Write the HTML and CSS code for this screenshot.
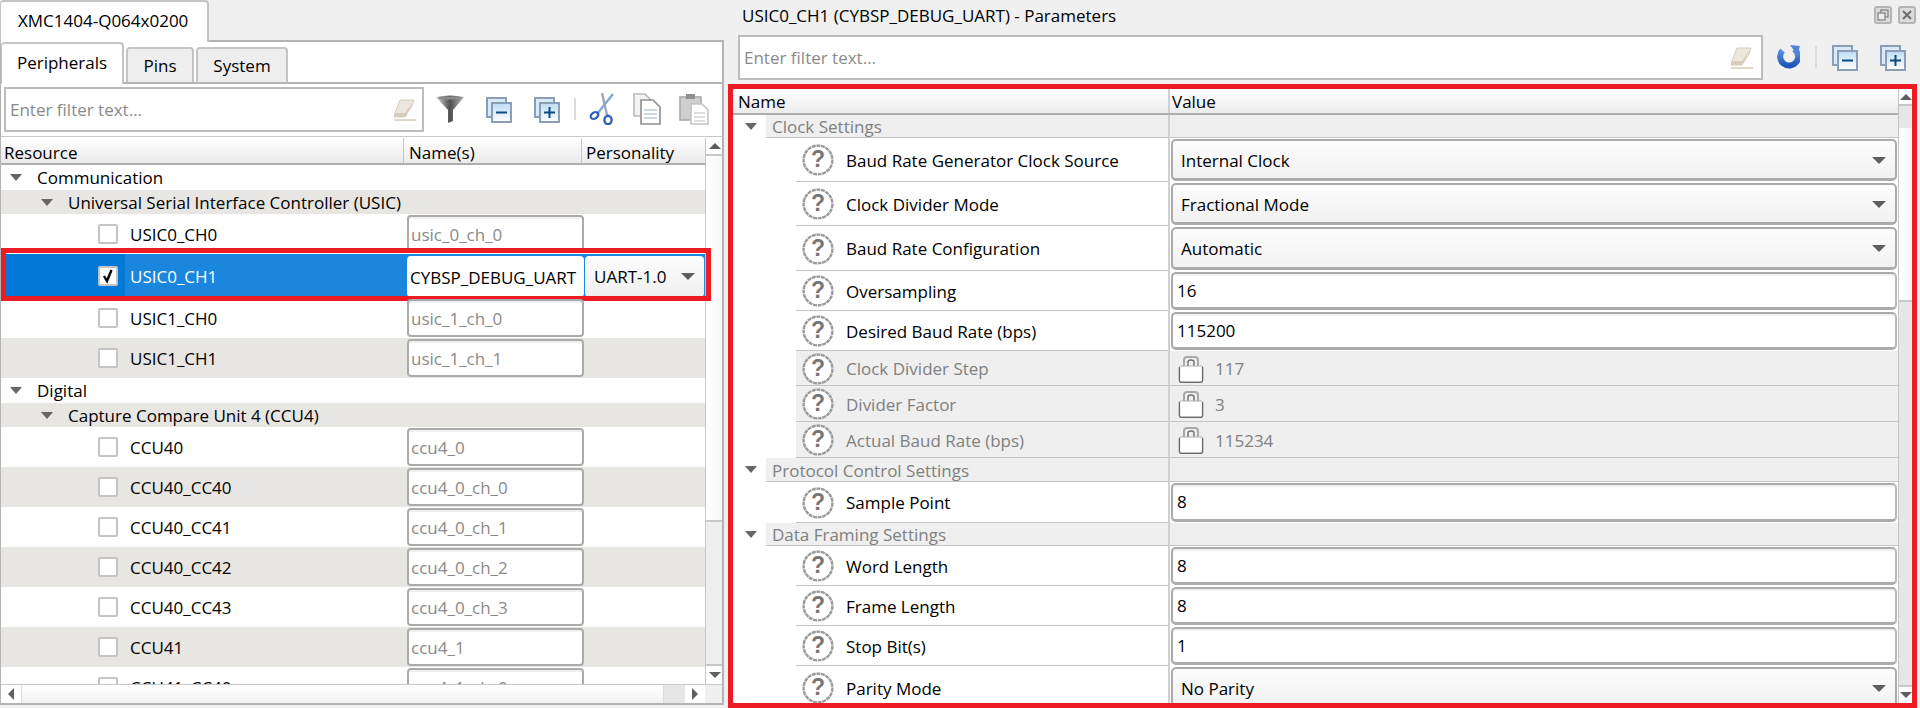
FILE: index.html
```html
<!DOCTYPE html>
<html lang="en">
<head>
<meta charset="utf-8">
<title>XMC1404-Q064x0200</title>
<link rel="stylesheet" href="styles.css">
</head>
<body>
<svg class="defs" width="0" height="0">
  <defs>
    <linearGradient id="gFunnel" x1="0" x2="1" y1="0" y2="0"><stop offset="0" stop-color="#d8d8d8"/><stop offset=".5" stop-color="#4f4f4f"/><stop offset="1" stop-color="#b8b8b8"/></linearGradient>
    <linearGradient id="gBox" x1="0" x2="0" y1="0" y2="1"><stop offset="0" stop-color="#bcdcf6"/><stop offset="1" stop-color="#ffffff"/></linearGradient>
    <linearGradient id="gRef" x1="0" x2="0" y1="0" y2="1"><stop offset="0" stop-color="#5f97e6"/><stop offset="1" stop-color="#1f55b5"/></linearGradient>
    <symbol id="i-eraser" viewBox="0 0 24 24">
      <path d="M8 2 H22 L20 8 L13 19 H2 L3 15 Z" fill="#ece7de" stroke="#d6ccbc"/>
      <path d="M3 15 L13 15 L21 4 L13 19 H2 Z" fill="#d9ccb8"/>
      <path d="M2 22 H24" stroke="#e0d8ca" stroke-width="2"/>
    </symbol>
    <symbol id="i-collapse" viewBox="0 0 26 26">
      <rect x="1" y="1" width="19" height="19" fill="#d9ebfa" stroke="#8c9db6" stroke-width="2"/>
      <rect x="6" y="6" width="19" height="19" fill="url(#gBox)" stroke="#8c9db6" stroke-width="2"/>
      <path d="M10 15.5 H21" stroke="#0b4a82" stroke-width="2"/>
    </symbol>
    <symbol id="i-expand" viewBox="0 0 26 26">
      <rect x="1" y="1" width="19" height="19" fill="#d9ebfa" stroke="#8c9db6" stroke-width="2"/>
      <rect x="6" y="6" width="19" height="19" fill="url(#gBox)" stroke="#8c9db6" stroke-width="2"/>
      <path d="M10 15.5 H21 M15.5 10 V21" stroke="#0b4a82" stroke-width="2"/>
    </symbol>
    <symbol id="i-help" viewBox="0 0 32 32">
      <circle cx="16" cy="16" r="14.4" fill="#fff" stroke="#9b9b9b" stroke-width="2.4" stroke-dasharray="4 .7"/>
      <text x="16" y="23" text-anchor="middle" class="help-q">?</text>
    </symbol>
    <symbol id="i-lock" viewBox="0 0 26 28">
      <path d="M6 13 V5 Q6 2 9 2 H17 Q20 2 20 5 V13" fill="none" stroke="#a9a9a9" stroke-width="2"/>
      <path d="M10 13 V7 Q10 5 13 5 Q16 5 16 7 V13" fill="none" stroke="#6f6f6f" stroke-width="1.4"/>
      <rect x="1" y="11" width="24" height="16" rx="2" fill="#fff" stroke="#b0b0b0"/>
      <path d="M1.5 12 V26 Q1.5 27.4 3 27.4 H23 Q24.5 27.4 24.5 26 V12" fill="none" stroke="#6a6a6a" stroke-width="1.2"/>
    </symbol>
  </defs>
</svg>

<div class="app">
  <section class="left">
    <div class="doc-tabs"><div class="doc-tab">XMC1404-Q064x0200</div></div>
    <div class="left-body">
      <div class="sub-tabs">
        <div class="sub-tab active">Peripherals</div>
        <div class="sub-tab pins">Pins</div>
        <div class="sub-tab sys">System</div>
      </div>
      <div class="left-tools">
        <div class="filter filter-left">
          <span class="ph">Enter filter text...</span>
          <svg class="ic-eraser"><use href="#i-eraser"/></svg>
        </div>
        <svg class="ic-funnel" viewBox="0 0 28 28"><path d="M0 2 Q14 -1 28 2 L17 15 V26 L12 28 V15 Z" fill="url(#gFunnel)"/><ellipse cx="14" cy="3" rx="12" ry="1.6" fill="#8a8a8a"/></svg>
        <svg class="ic-box first"><use href="#i-collapse"/></svg>
        <svg class="ic-box"><use href="#i-expand"/></svg>
        <span class="tool-sep"></span>
        <svg class="ic-scissors" viewBox="0 0 26 32">
          <path d="M24 1 L8 21" stroke="#7fa6d8" stroke-width="2.4"/>
          <path d="M13 0 L18 22" stroke="#9aa7b6" stroke-width="2.4"/>
          <ellipse cx="5.5" cy="22.5" rx="4.2" ry="3" fill="none" stroke="#2f5fc0" stroke-width="2.2" transform="rotate(-35 5.5 22.5)"/>
          <ellipse cx="19" cy="27" rx="3.6" ry="4.2" fill="none" stroke="#2f5fc0" stroke-width="2.4"/>
        </svg>
        <svg class="ic-copy" viewBox="0 0 28 32">
          <path d="M1 1 H12 L17 6 V23 H1 Z" fill="#f4f4f4" stroke="#b9b9b9" stroke-width="1.6"/>
          <path d="M8 7 H20 L27 14 V31 H8 Z" fill="#fff" stroke="#8e8e8e" stroke-width="1.6"/>
          <path d="M11 17 H24 M11 21 H24 M11 25 H24" stroke="#b9cde0" stroke-width="1.6"/>
        </svg>
        <svg class="ic-paste" viewBox="0 0 30 32">
          <rect x="1" y="4" width="21" height="23" fill="#cfcfcf" stroke="#a9a9a9" stroke-width="1.6"/>
          <rect x="7" y="1" width="9" height="5" fill="#8f8f8f"/>
          <path d="M12 11 H23 L29 17 V31 H12 Z" fill="#fff" stroke="#c4c4c4" stroke-width="1.6"/>
          <path d="M15 20 H26 M15 24 H26 M15 28 H26" stroke="#d4d4d4" stroke-width="1.6"/>
        </svg>
      </div>
      <div class="tree-wrap">
        <div class="tree">
          <div class="thead">
            <div class="th c-res">Resource</div>
            <div class="th c-name">Name(s)</div>
            <div class="th c-pers">Personality</div>
          </div>
          <div class="trow cat"><i class="tri tri-a"></i><span>Communication</span></div>
          <div class="trow sub alt"><i class="tri tri-b"></i><span>Universal Serial Interface Controller (USIC)</span></div>
          <div class="trow item"><div class="c-res"><i class="cb"></i><span>USIC0_CH0</span></div><div class="c-name"><div class="nm">usic_0_ch_0</div></div></div>
          <div class="trow item sel">
            <div class="c-res"><i class="sel-mark"></i><i class="cb"><svg class="tick" viewBox="0 0 16 16"><path d="M4 8 L7 13 L11.5 2" fill="none" stroke="#000" stroke-width="2.4"/></svg></i><span>USIC0_CH1</span></div>
            <div class="c-name"><div class="nm on">CYBSP_DEBUG_UART</div></div>
            <div class="c-pers"><div class="pers">UART-1.0<i class="tri tri-c"></i></div></div>
            <div class="red-row"></div>
          </div>
          <div class="trow item"><div class="c-res"><i class="cb"></i><span>USIC1_CH0</span></div><div class="c-name"><div class="nm">usic_1_ch_0</div></div></div>
          <div class="trow item alt"><div class="c-res"><i class="cb"></i><span>USIC1_CH1</span></div><div class="c-name"><div class="nm">usic_1_ch_1</div></div></div>
          <div class="trow cat"><i class="tri tri-a"></i><span>Digital</span></div>
          <div class="trow sub alt"><i class="tri tri-b"></i><span>Capture Compare Unit 4 (CCU4)</span></div>
          <div class="trow item"><div class="c-res"><i class="cb"></i><span>CCU40</span></div><div class="c-name"><div class="nm">ccu4_0</div></div></div>
          <div class="trow item alt"><div class="c-res"><i class="cb"></i><span>CCU40_CC40</span></div><div class="c-name"><div class="nm">ccu4_0_ch_0</div></div></div>
          <div class="trow item"><div class="c-res"><i class="cb"></i><span>CCU40_CC41</span></div><div class="c-name"><div class="nm">ccu4_0_ch_1</div></div></div>
          <div class="trow item alt"><div class="c-res"><i class="cb"></i><span>CCU40_CC42</span></div><div class="c-name"><div class="nm">ccu4_0_ch_2</div></div></div>
          <div class="trow item"><div class="c-res"><i class="cb"></i><span>CCU40_CC43</span></div><div class="c-name"><div class="nm">ccu4_0_ch_3</div></div></div>
          <div class="trow item alt"><div class="c-res"><i class="cb"></i><span>CCU41</span></div><div class="c-name"><div class="nm">ccu4_1</div></div></div>
          <div class="trow item"><div class="c-res"><i class="cb"></i><span>CCU41_CC40</span></div><div class="c-name"><div class="nm">ccu4_1_ch_0</div></div></div>
        </div>
        <div class="vbar vbar-left">
          <div class="vbtn"><i class="arr up"></i></div>
          <div class="vthumb"></div>
          <div class="vtrack"></div>
          <div class="vbtn dn"><i class="arr down"></i></div>
        </div>
      </div>
      <div class="hbar">
        <div class="hbtn"><i class="arr lf"></i></div>
        <div class="hthumb"></div>
        <div class="htrack"></div>
        <div class="hbtn"><i class="arr rt"></i></div>
        <div class="hcorner"></div>
      </div>
    </div>
  </section>

  <section class="right">
    <div class="r-title">
      <span>USIC0_CH1 (CYBSP_DEBUG_UART) - Parameters</span>
      <div class="win-btns">
        <svg class="win" viewBox="0 0 18 18"><rect x="1" y="1" width="16" height="16" rx="2" fill="#dcdcdc" stroke="#b4b4b4" stroke-width="2"/><rect x="7" y="4" width="7" height="7" fill="none" stroke="#8c8c8c" stroke-width="1.4"/><rect x="4" y="7" width="7" height="7" fill="#eee" stroke="#8c8c8c" stroke-width="1.4"/></svg>
        <svg class="win" viewBox="0 0 18 18"><rect x="1" y="1" width="16" height="16" rx="2" fill="#dcdcdc" stroke="#b4b4b4" stroke-width="2"/><path d="M5 5 L13 13 M13 5 L5 13" stroke="#707070" stroke-width="2.2"/></svg>
      </div>
    </div>
    <div class="r-tools">
      <div class="filter filter-right">
        <span class="ph">Enter filter text...</span>
        <svg class="ic-eraser"><use href="#i-eraser"/></svg>
      </div>
      <svg class="ic-refresh" viewBox="0 0 24 24"><path d="M6.5 5.5 A9 9 0 1 0 18 4" fill="none" stroke="url(#gRef)" stroke-width="6"/><path d="M14 0 L24 1 L21 10 Z" fill="#4f86da"/></svg>
      <span class="tool-sep r-sep"></span>
      <svg class="ic-box r-first"><use href="#i-collapse"/></svg>
      <svg class="ic-box r-second"><use href="#i-expand"/></svg>
    </div>
    <div class="params">
      <div class="ptable">
        <div class="phead"><div class="ph-name">Name</div><div class="ph-val">Value</div></div>
        <div class="prow grp h23"><div class="pn"><i class="tri tri-p"></i><div class="pn-in">Clock Settings</div></div><div class="pv"></div></div>
        <div class="prow h44"><div class="pn"><div class="pn-in"><svg class="help"><use href="#i-help"/></svg>Baud Rate Generator Clock Source</div></div><div class="pv"><div class="combo">Internal Clock<i class="tri tri-c"></i></div></div></div>
        <div class="prow h44"><div class="pn"><div class="pn-in"><svg class="help"><use href="#i-help"/></svg>Clock Divider Mode</div></div><div class="pv"><div class="combo">Fractional Mode<i class="tri tri-c"></i></div></div></div>
        <div class="prow h45"><div class="pn"><div class="pn-in"><svg class="help"><use href="#i-help"/></svg>Baud Rate Configuration</div></div><div class="pv"><div class="combo">Automatic<i class="tri tri-c"></i></div></div></div>
        <div class="prow h40"><div class="pn"><div class="pn-in"><svg class="help"><use href="#i-help"/></svg>Oversampling</div></div><div class="pv"><div class="field">16</div></div></div>
        <div class="prow h40"><div class="pn"><div class="pn-in"><svg class="help"><use href="#i-help"/></svg>Desired Baud Rate (bps)</div></div><div class="pv"><div class="field">115200</div></div></div>
        <div class="prow dis h35"><div class="pn"><div class="pn-in"><svg class="help"><use href="#i-help"/></svg>Clock Divider Step</div></div><div class="pv"><svg class="lock"><use href="#i-lock"/></svg>117</div></div>
        <div class="prow dis h36"><div class="pn"><div class="pn-in"><svg class="help"><use href="#i-help"/></svg>Divider Factor</div></div><div class="pv"><svg class="lock"><use href="#i-lock"/></svg>3</div></div>
        <div class="prow dis h36"><div class="pn"><div class="pn-in"><svg class="help"><use href="#i-help"/></svg>Actual Baud Rate (bps)</div></div><div class="pv"><svg class="lock"><use href="#i-lock"/></svg>115234</div></div>
        <div class="prow grp h24"><div class="pn"><i class="tri tri-p"></i><div class="pn-in">Protocol Control Settings</div></div><div class="pv"></div></div>
        <div class="prow h41"><div class="pn"><div class="pn-in"><svg class="help"><use href="#i-help"/></svg>Sample Point</div></div><div class="pv"><div class="field">8</div></div></div>
        <div class="prow grp h23"><div class="pn"><i class="tri tri-p"></i><div class="pn-in">Data Framing Settings</div></div><div class="pv"></div></div>
        <div class="prow h40"><div class="pn"><div class="pn-in"><svg class="help"><use href="#i-help"/></svg>Word Length</div></div><div class="pv"><div class="field">8</div></div></div>
        <div class="prow h40"><div class="pn"><div class="pn-in"><svg class="help"><use href="#i-help"/></svg>Frame Length</div></div><div class="pv"><div class="field">8</div></div></div>
        <div class="prow h40"><div class="pn"><div class="pn-in"><svg class="help"><use href="#i-help"/></svg>Stop Bit(s)</div></div><div class="pv"><div class="field">1</div></div></div>
        <div class="prow h44"><div class="pn"><div class="pn-in"><svg class="help"><use href="#i-help"/></svg>Parity Mode</div></div><div class="pv"><div class="combo">No Parity<i class="tri tri-c"></i></div></div></div>
      </div>
      <div class="vbar vbar-right">
        <div class="vbtn rb"><i class="arr up"></i></div>
        <div class="vtrack t22"></div>
        <div class="vthumb r"></div>
        <div class="vtrack"></div>
        <div class="vbtn rb dn"><i class="arr down"></i></div>
      </div>
    </div>
  </section>
</div>
</body>
</html>
```

FILE: styles.css
```css
* { box-sizing: border-box; }
html, body { margin: 0; padding: 0; height: 708px; overflow: hidden; }
body { background: #f0f0f0; font-family: "Open Sans", "Noto Sans", sans-serif; font-size: 17px; color: #000; }
.defs { position: absolute; }
i { display: block; font-style: normal; flex: none; }
svg { display: block; flex: none; }
.help-q { font: bold 23px "Liberation Sans", sans-serif; fill: #777; }

.app { display: flex; height: 708px; }

/* Left panel */
.left { width: 724px; flex: none; display: flex; flex-direction: column; }
.doc-tabs { height: 40px; flex: none; display: flex; }
.doc-tab { width: 209px; height: 42px; margin-bottom: -2px; background: #fff; border: 2px solid #c4c4c4; border-bottom: 0; border-left-width: 1px; border-radius: 4px 4px 0 0; padding-left: 17px; line-height: 38px; position: relative; z-index: 1; }
.left-body { height: 665px; flex: none; background: #fff; border: 2px solid #b4b4b4; border-left-width: 1px; display: flex; flex-direction: column; }

.sub-tabs { height: 42px; flex: none; display: flex; align-items: flex-end; gap: 2px; border-bottom: 2px solid #b4b4b4; }
.sub-tab { height: 35px; background: #eeeeee; border: 2px solid #c4c4c4; border-bottom: 0; border-radius: 4px 4px 0 0; text-align: center; line-height: 33px; }
.sub-tab.active { width: 123px; height: 42px; margin-bottom: -2px; background: #fff; line-height: 38px; position: relative; border-left-width: 1px; }
.sub-tab.pins { width: 68px; }
.sub-tab.sys { width: 92px; }

.left-tools { height: 53px; flex: none; display: flex; align-items: flex-start; border-bottom: 1px solid #c8c8c8; }
.filter { height: 45px; background: #fff; border: 2px solid #bcbcbc; display: flex; align-items: center; justify-content: space-between; flex: none; }
.ph { color: #8a8a8a; }
.filter-left { width: 420px; margin: 3px 0 0 3px; padding: 0 6px 0 4px; }
.filter-right { width: 1025px; margin-left: 14px; padding: 0 8px 0 4px; }
.ic-eraser { width: 24px; height: 24px; }
.ic-funnel { width: 28px; height: 28px; margin: 11px 0 0 12px; }
.ic-box { width: 26px; height: 26px; }
.ic-box.first { margin: 13px 22px 0 22px; }
.left-tools .ic-box:not(.first) { margin-top: 13px; }
.tool-sep { width: 2px; height: 22px; background: #dcdcdc; margin: 14px 15px 0 14px; flex: none; }
.ic-scissors { width: 26px; height: 32px; margin: 9px 18px 0 -2px; }
.ic-copy { width: 28px; height: 32px; margin: 9px 18px 0 0; }
.ic-paste { width: 30px; height: 32px; margin-top: 9px; }

/* Tree */
.tree-wrap { height: 546px; flex: none; margin-top: 1px; display: flex; overflow: hidden; }
.tree { width: 704px; flex: none; position: relative; z-index: 1; }
.thead { height: 27px; display: flex; background: linear-gradient(#ffffff, #ebebeb); border-bottom: 2px solid #aeaeae; line-height: 29px; }
.c-res { width: 403px; flex: none; display: flex; align-items: center; }
.c-name { width: 178px; flex: none; }
.c-pers { width: 123px; flex: none; }
.th { border-right: 1px solid #c8c8c8; padding-left: 3px; display: block; }
.th.c-pers { border-right: 0; padding-left: 4px; }
.th.c-name { padding-left: 5px; }

.trow { display: flex; align-items: center; position: relative; }
.trow.alt { background: #e8e6e3; }
.trow.cat { height: 25px; }
.trow.sub { height: 24px; }
.trow.item { height: 40px; }
.trow.sel { height: 44px; background: #1a86de; }
.trow span { white-space: nowrap; }
.tri { width: 0; height: 0; border-left: 6px solid transparent; border-right: 6px solid transparent; border-top: 7px solid #666; }
.tri-a { margin: 0 15px 0 9px; }
.tri-b { margin: 0 15px 0 40px; }
.tri-c { position: absolute; right: 9px; top: 50%; margin-top: -3px; border-left-width: 7px; border-right-width: 7px; border-top-color: #5e5e5e; }
.cb { width: 20px; height: 20px; margin: 0 12px 0 97px; background: #fff; border: 2px solid #c4c4c4; border-radius: 2px; position: relative; }
.tick { width: 16px; height: 16px; }
.sel .c-res { position: relative; color: #fff; height: 100%; }
.sel-mark { position: absolute; left: 0; top: 0; bottom: 0; width: 124px; background: #0078d7; }
.sel .c-res span { position: relative; }
.nm { width: 177px; height: 38px; margin: 0 0 0 3px; background: #fff; border: 2px solid #ababab; border-radius: 4px; padding-left: 2px; line-height: 36px; color: #8a8a8a; box-shadow: inset 0 2px 0 #f0f0f0; }
.nm.on { height: 41px; line-height: 39px; color: #000; border-color: #fff; box-shadow: none; padding-left: 1px; white-space: nowrap; overflow: hidden; }
.pers { position: relative; height: 41px; width: 119px; margin-left: 3px; background: linear-gradient(#fdfdfd, #efefef); border-radius: 4px; padding-left: 9px; line-height: 41px; }
.red-row { position: absolute; left: 0; top: -6px; width: 710px; height: 53px; border: 5px solid #ed1c24; pointer-events: none; }

.vbar { flex: none; display: flex; flex-direction: column; background: #e6e6e6; }
.vbar-left { width: 18px; border-left: 1px solid #c8c8c8; }
.vbtn { height: 18px; flex: none; background: #fff; border-bottom: 2px solid #c8c8c8; display: flex; align-items: center; justify-content: center; }
.vbtn.dn { height: 20px; border-bottom: 0; border-top: 2px solid #c8c8c8; }
.vthumb { height: 366px; flex: none; background: linear-gradient(90deg, #ffffff, #f7f7f7); border-bottom: 2px solid #c8c8c8; }
.vtrack { flex: 1; background: #eeeeee; }
.arr { width: 0; height: 0; }
.arr.up { border-left: 6px solid transparent; border-right: 6px solid transparent; border-bottom: 6px solid #5e5e5e; }
.arr.down { border-left: 6px solid transparent; border-right: 6px solid transparent; border-top: 6px solid #5e5e5e; }
.arr.lf { border-top: 6px solid transparent; border-bottom: 6px solid transparent; border-right: 6px solid #5e5e5e; }
.arr.rt { border-top: 6px solid transparent; border-bottom: 6px solid transparent; border-left: 6px solid #5e5e5e; }

.hbar { flex: 1; display: flex; border-top: 1px solid #c8c8c8; background: #f7f7f7; }
.hbtn { width: 20px; flex: none; display: flex; align-items: center; justify-content: center; background: #fff; }
.hthumb { width: 643px; flex: none; background: linear-gradient(#ffffff, #f3f3f3); border-left: 1px solid #dcdcdc; border-right: 1px solid #dcdcdc; }
.htrack { width: 21px; flex: none; background: #e6e6e6; }
.hcorner { flex: 1; background: #f0f0f0; }

/* Right panel */
.right { flex: 1; min-width: 0; display: flex; flex-direction: column; }
.r-title { height: 35px; flex: none; display: flex; justify-content: space-between; padding: 6px 4px 0 18px; line-height: 20px; }
.win-btns { display: flex; gap: 6px; }
.win { width: 18px; height: 18px; }
.r-tools { height: 49px; flex: none; display: flex; align-items: flex-start; }
.ic-refresh { width: 24px; height: 24px; margin: 10px 0 0 13px; }
.r-sep { margin: 11px 15px 0 15px; }
.ic-box.r-first { margin: 10px 22px 0 0; }
.ic-box.r-second { margin-top: 10px; }

.params { height: 624px; flex: none; margin: 0 3px 0 4px; border: 5px solid #ed1c24; background: #fff; display: flex; overflow: hidden; }
.ptable { flex: 1; min-width: 0; overflow: hidden; }
.phead { height: 26px; display: flex; background: linear-gradient(#ffffff, #ececec); border-bottom: 2px solid #aeaeae; line-height: 25px; }
.ph-name { width: 437px; flex: none; padding-left: 5px; border-right: 2px solid #d0d0d0; }
.ph-val { padding-left: 2px; }

.prow { display: flex; overflow: hidden; }
.h23 { height: 23px; } .h24 { height: 24px; } .h35 { height: 35px; } .h36 { height: 36px; }
.h40 { height: 40px; } .h41 { height: 41px; } .h44 { height: 44px; } .h45 { height: 45px; }
.pn { width: 437px; flex: none; padding-left: 63px; border-right: 2px solid #d0d0d0; display: flex; position: relative; }
.pn-in { flex: 1; display: flex; align-items: center; border-bottom: 1px solid #c4c4c4; padding: 1px 0 0 6px; white-space: nowrap; }
.help { width: 32px; height: 32px; margin-right: 12px; }
.pv { flex: 1; min-width: 0; padding: 1px; }
.combo, .field { position: relative; height: 100%; border: 2px solid #ababab; border-bottom-width: 3px; border-radius: 5px; }
.combo { background: linear-gradient(#fdfdfd, #f1f1f1); padding-left: 8px; line-height: 39px; }
.field { background: #fff; padding-left: 4px; line-height: 34px; box-shadow: inset 0 2px 0 #f0f0f0; border-right-color: #b8b8b8; }

.grp .pn { padding-left: 33px; }
.grp .pn-in { background: #efefef; color: #808080; }
.grp .pv { background: #efefef; border-bottom: 1px solid #c4c4c4; }
.tri-p { position: absolute; left: 12px; top: 8px; }
.dis .pn-in { background: #efefef; color: #808080; }
.dis .pv { background: #efefef; border-bottom: 1px solid #c4c4c4; color: #808080; display: flex; align-items: center; padding: 1px 0 0 8px; }
.lock { width: 26px; height: 28px; margin-right: 11px; }

.vbar-right { width: 14px; border-left: 1px solid #c4c4c4; }
.vbtn.rb { height: 17px; }
.vbtn.rb.dn { height: 18px; }
.vtrack.t22 { flex: none; height: 22px; background: #e6e6e6; }
.vthumb.r { height: 174px; }
.vbar-right .vtrack:not(.t22) { background: #e6e6e6; }
```
